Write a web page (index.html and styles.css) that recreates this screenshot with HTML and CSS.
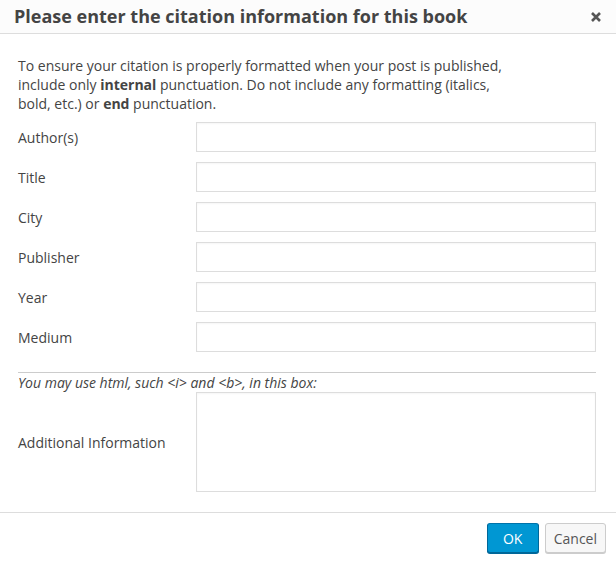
FILE: index.html
```html
<!DOCTYPE html>
<html>
<head>
<meta charset="utf-8">
<link rel="stylesheet" href="styles.css">
</head>
<body>
<div class="dialog">
  <div class="head">
    <div class="title">Please enter the citation information for this book</div>
    <svg class="close" width="12" height="12" viewBox="0 0 12 12"><path d="M2 2 L10 10 M10 2 L2 10" stroke="#555" stroke-width="2.6" stroke-linecap="butt"/></svg>
  </div>
  <div class="body">
    <p class="intro">To ensure your citation is properly formatted when your post is published, include only <b>internal</b> punctuation. Do not include any formatting (italics, bold, etc.) or <b>end</b> punctuation.</p>
    <div class="rows">
      <div class="row"><label>Author(s)</label><div class="input"></div></div>
      <div class="row"><label>Title</label><div class="input"></div></div>
      <div class="row"><label>City</label><div class="input"></div></div>
      <div class="row"><label>Publisher</label><div class="input"></div></div>
      <div class="row"><label>Year</label><div class="input"></div></div>
      <div class="row"><label>Medium</label><div class="input"></div></div>
    </div>
    <div class="sep"></div>
    <div class="hint">You may use html, such &lt;i&gt; and &lt;b&gt;, in this box:</div>
    <div class="row tall"><label>Additional Information</label><div class="input area"></div></div>
  </div>
  <div class="foot">
    <button class="btn primary">OK</button>
    <button class="btn">Cancel</button>
  </div>
</div>
</body>
</html>
```
FILE: styles.css
```css
html, body { margin: 0; padding: 0; background: #fff; }
body { font-family: "Open Sans", "Liberation Sans", sans-serif; color: #444; font-size: 14px; }
.dialog { width: 616px; height: 563px; display: flex; flex-direction: column; }
.head { height: 33px; background: #fcfcfc; border-bottom: 1px solid #ddd; display: flex; align-items: center; justify-content: space-between; padding: 0 14px 0 14px; }
.title { font-size: 18px; font-weight: 700; color: #444; line-height: 33px; }
.body { padding: 22px 20px 0 18px; flex: 1; }
.intro { margin: 0 0 9px 0; line-height: 19.1px; width: 490px; }
.intro b { font-weight: 700; }
.rows { display: flex; flex-direction: column; gap: 10px; }
.row { display: flex; align-items: center; }
.row label { width: 178px; flex: none; }
.input { width: 398px; height: 28px; border: 1px solid #ddd; box-shadow: inset 0 1px 2px rgba(0,0,0,0.04); background: #fff; }
.input.area { height: 98px; }
.sep { border-top: 1px solid #ccc; margin-top: 20px; }
.hint { font-style: italic; line-height: 19.1px; margin: 0; }
.foot { height: 50px; border-top: 1px solid #ddd; display: flex; justify-content: flex-end; align-items: center; gap: 6px; padding-right: 10px; }
.btn { font-family: inherit; font-size: 14px; height: 30px; border-radius: 3px; padding: 0 8px; border: 1px solid #ccc; background: #f7f7f7; color: #555; box-shadow: 0 1px 0 #ccc; }
.btn.primary { background: #0097d3; border-color: #0073aa #006799 #006799; color: #fff; width: 52px; box-shadow: 0 1px 0 #006799; }
```
